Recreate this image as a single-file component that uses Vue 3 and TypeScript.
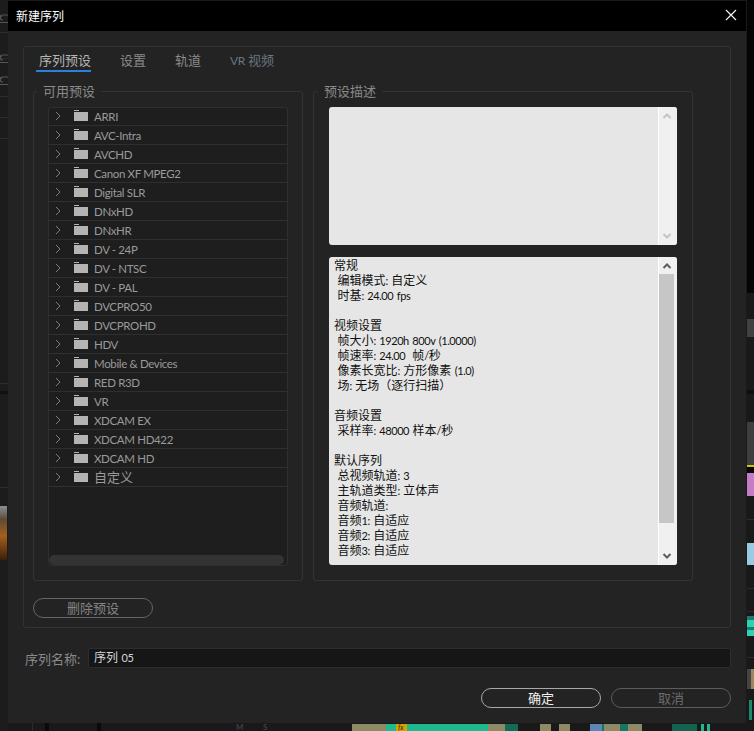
<script setup lang="ts">
interface Run { text: string; latin: boolean }

// Latin and CJK runs use different sizes, so each string is split into runs.
function runs(s: string): Run[] {
  const parts = s.match(/[\u0020-\u007e]+|[^\u0020-\u007e]+/g) ?? []
  return parts.map((text) => ({ text, latin: /^[\u0020-\u007e]/.test(text) }))
}

const presets: string[] = [
  'ARRI', 'AVC-Intra', 'AVCHD', 'Canon XF MPEG2', 'Digital SLR', 'DNxHD', 'DNxHR',
  'DV - 24P', 'DV - NTSC', 'DV - PAL', 'DVCPRO50', 'DVCPROHD', 'HDV', 'Mobile & Devices',
  'RED R3D', 'VR', 'XDCAM EX', 'XDCAM HD422', 'XDCAM HD', '自定义',
]
const tabs = ['序列预设', '设置', '轨道', 'VR 视频']
const info: string[] = [
  '常规', ' 编辑模式: 自定义', ' 时基: 24.00 fps', '',
  '视频设置', ' 帧大小: 1920h 800v (1.0000)', ' 帧速率: 24.00  帧/秒', ' 像素长宽比: 方形像素 (1.0)', ' 场: 无场（逐行扫描）', '',
  '音频设置', ' 采样率: 48000 样本/秒', '',
  '默认序列', ' 总视频轨道: 3', ' 主轨道类型: 立体声', ' 音频轨道:', ' 音频1: 自适应', ' 音频2: 自适应', ' 音频3: 自适应',
]
const sideBlocks = [
  { top: 0, h: 293, c: '#050505', left: 747, w: 7 },
  { top: 319, h: 18, c: '#404040', left: 747, w: 7 },
  { top: 390, h: 4, c: '#0e0e0e', left: 747, w: 7 },
  { top: 422, h: 43, c: '#3e3e3e', left: 747, w: 7 },
  { top: 465, h: 2, c: '#c9c400', left: 747, w: 7 },
  { top: 467, h: 6, c: '#050505', left: 747, w: 7 },
  { top: 473, h: 23, c: '#c47cc6', left: 747, w: 7 },
  { top: 519, h: 1, c: '#2c2c2c', left: 747, w: 7 },
  { top: 543, h: 22, c: '#97cbe2', left: 747, w: 7 },
  { top: 588, h: 1, c: '#2c2c2c', left: 747, w: 7 },
  { top: 611, h: 1, c: '#2c2c2c', left: 747, w: 7 },
  { top: 616, h: 20, c: '#2bd3b4', left: 747, w: 7 },
  { top: 616, h: 4, c: '#1c7d68', left: 747, w: 7 },
  { top: 627, h: 3, c: '#1c7d68', left: 747, w: 7 },
  { top: 657, h: 1, c: '#2c2c2c', left: 747, w: 7 },
  { top: 669, h: 20, c: '#444444', left: 747, w: 4 },
  { top: 669, h: 20, c: '#97875a', left: 751, w: 3 },
  { top: 700, h: 20, c: '#1d8a6c', left: 749, w: 3 },
]
const clips = [
  { left: 352, w: 166, c: '#1fb98d' },
  { left: 352, w: 34, c: '#8f8a66' },
  { left: 396, w: 11, c: '#d6a300' },
  { left: 488, w: 17, c: '#8f8a66' },
  { left: 505, w: 13, c: '#136b55' },
  { left: 540, w: 11, c: '#8f8a66' },
  { left: 559, w: 11, c: '#8f8a66' },
  { left: 590, w: 12, c: '#5f84b8' },
  { left: 602, w: 40, c: '#16775f' },
  { left: 604, w: 16, c: '#8f8a66' },
  { left: 628, w: 14, c: '#8f8a66' },
  { left: 672, w: 25, c: '#14634f' },
  { left: 701, w: 3, c: '#1fb98d' },
  { left: 707, w: 3, c: '#1fb98d' },
]
const trackLabels = [
  { t: 'M', x: 236 },
  { t: 'S', x: 263 },
]
const stripLines = [32, 58, 96, 117, 138, 383, 487]
</script>

<template>
  <div class="screen">
    <div class="left-strip">
      <div v-for="y in stripLines" :key="y" class="strip-line" :style="{ top: y + 'px' }"></div>
      <svg v-for="y in [20, 60, 82]" :key="y" class="undo" :style="{ top: y - 7 + 'px' }" width="8" height="14" viewBox="0 0 8 14">
        <path d="M8 2H3C1 2 0 3 0 4.500S1 7 3 7M0 4.500L2 2.500M0 9.500h8" fill="none" stroke="#555" stroke-width="1.2" />
      </svg>
      <div class="strip-bar"></div>
      <div class="thumb"></div>
    </div>
    <div
      v-for="b in sideBlocks"
      :key="b.top + '-' + b.left"
      class="side-block"
      :style="{ top: b.top + 'px', height: b.h + 'px', background: b.c, left: b.left + 'px', width: b.w + 'px' }"
    ></div>
    <div
      v-for="c in clips"
      :key="c.left"
      class="clip"
      :style="{ left: c.left + 'px', width: c.w + 'px', background: c.c }"
    ></div>
    <span class="fx">fx</span>
    <div class="track-post a"></div>
    <div class="track-post b"></div>
    <div class="track-post c"></div>
    <span
      v-for="l in trackLabels"
      :key="l.t"
      class="track-label"
      :style="{ left: l.x + 'px' }"
    >{{ l.t }}</span>

    <section class="dialog">
      <header class="titlebar">
        <span class="title">新建序列</span>
        <svg class="close" width="12" height="12" viewBox="0 0 12 12">
          <path d="M1 1l10 10M11 1L1 11" stroke="#f2f2f2" stroke-width="1.2" fill="none" />
        </svg>
      </header>

      <div class="tabgroup">
        <nav class="tabs">
          <span
            v-for="(t, i) in tabs"
            :key="t"
            class="tab"
            :class="{ active: i === 0, dim: i === 3 }"
          ><span v-for="(r, k) in runs(t)" :key="k" :class="{ 'lat-tab': r.latin }">{{ r.text }}</span></span>
        </nav>

        <div class="columns">
          <fieldset class="group group-left">
            <legend>可用预设</legend>
            <div class="list">
              <div v-for="p in presets" :key="p" class="row">
                <svg class="chev" width="6" height="10" viewBox="0 0 6 10">
                  <path d="M1 1l4 4-4 4" fill="none" stroke="#7d7d7d" stroke-width="1" />
                </svg>
                <svg class="folder" width="14" height="12" viewBox="0 0 14 12">
                  <rect x="0" y="0" width="5" height="1" fill="#b4b4b4" />
                  <rect x="0" y="2" width="14" height="9" fill="#b4b4b4" />
                </svg>
                <span class="name"><span v-for="(r, k) in runs(p)" :key="k" :class="{ 'lat-row': r.latin }">{{ r.text }}</span></span>
              </div>
              <div class="hthumb"></div>
            </div>
          </fieldset>

          <fieldset class="group group-right">
            <legend>预设描述</legend>
            <div class="panel panel-desc">
              <div class="panel-body"></div>
              <div class="vbar faint">
                <svg width="10" height="8" viewBox="0 0 10 8"><path d="M1.500 6L5 2.500 8.500 6" fill="none" stroke="currentColor" stroke-width="2" /></svg>
                <svg class="arrow-end" width="10" height="8" viewBox="0 0 10 8"><path d="M1.500 2L5 5.500 8.500 2" fill="none" stroke="currentColor" stroke-width="2" /></svg>
              </div>
            </div>
            <div class="panel panel-info">
              <div class="panel-body text">
                <div v-for="(l, i) in info" :key="i" class="line"><span v-for="(r, k) in runs(l)" :key="k" :class="{ 'lat-text': r.latin }">{{ r.text }}</span></div>
              </div>
              <div class="vbar">
                <svg width="10" height="8" viewBox="0 0 10 8"><path d="M1.500 6L5 2.500 8.500 6" fill="none" stroke="currentColor" stroke-width="2" /></svg>
                <div class="vthumb"></div>
                <svg class="arrow-end" width="10" height="8" viewBox="0 0 10 8"><path d="M1.500 2L5 5.500 8.500 2" fill="none" stroke="currentColor" stroke-width="2" /></svg>
              </div>
            </div>
          </fieldset>
        </div>

        <button class="btn btn-delete" type="button">删除预设</button>
      </div>

      <div class="name-row">
        <span class="name-label">序列名称:</span>
        <div class="name-input"><span v-for="(r, k) in runs('序列 05')" :key="k" :class="{ 'lat-text': r.latin }">{{ r.text }}</span></div>
      </div>

      <div class="actions">
        <button class="btn btn-ok" type="button">确定</button>
        <button class="btn btn-cancel" type="button">取消</button>
      </div>
    </section>
  </div>
</template>

<style>
html, body { margin: 0; background: #1a1a1a; }
</style>

<style scoped>
.screen {
  position: relative;
  width: 754px;
  height: 731px;
  overflow: hidden;
  background: #191919;
  font-family: "Lato", "Noto Sans CJK SC", sans-serif;
  font-size: 12px;
}
.left-strip {
  position: absolute;
  left: 0;
  top: 0;
  width: 8px;
  height: 731px;
  background: #1c1c1c;
}
.strip-line { position: absolute; left: 0; width: 8px; height: 1px; background: #2c2c2c; }
.strip-bar { position: absolute; left: 0; top: 391px; width: 8px; height: 3px; background: #111; }
.undo { position: absolute; left: 0; }
.thumb {
  position: absolute;
  left: 0;
  top: 506px;
  width: 7px;
  height: 54px;
  background: linear-gradient(#8b8f90 0, #5d4a35 25%, #a35f1b 55%, #3d1f0a 100%);
}
.side-block { position: absolute; }
.clip { position: absolute; top: 724px; height: 7px; }
.fx {
  position: absolute;
  left: 398px;
  top: 724px;
  font-size: 7px;
  line-height: 7px;
  font-style: italic;
  color: #3a2c00;
}
.track-post { position: absolute; top: 723px; height: 8px; background: #0a0a0a; }
.track-post.a { left: 32px; width: 1px; background: #2c2c2c; }
.track-post.b { left: 45px; width: 4px; }
.track-post.c { left: 97px; width: 4px; }
.track-label {
  position: absolute;
  top: 723px;
  font-size: 8px;
  line-height: 8px;
  color: #4c4c4c;
}

.dialog {
  position: absolute;
  left: 8px;
  top: 1px;
  width: 738px;
  height: 722px;
  background: #232323;
  display: flex;
  flex-direction: column;
}
.titlebar {
  box-sizing: border-box;
  height: 30px;
  flex: none;
  background: #000;
  display: flex;
  align-items: center;
  justify-content: space-between;
  padding: 0 9px 2px 8px;
}
.title { color: #fff; font-size: 12px; }
.tabgroup {
  margin: 15px 15px 0;
  height: 582px;
  box-sizing: border-box;
  border: 1px solid #333;
  border-radius: 3px;
  padding: 0 9px;
  flex: none;
}
.tabs { display: flex; gap: 26px; padding-left: 3px; height: 25px; }
.tab {
  box-sizing: border-box;
  height: 25px;
  padding: 4px 0 0 3px;
  font-size: 13px;
  line-height: 18px;
  color: #8a8a8a;
}
.tab.active { color: #b4b4b4; border-bottom: 2px solid #2b80dc; }
.tab.dim { color: #6b7680; }
.lat-tab { font-size: 12px; letter-spacing: -0.3px; }

.columns { display: flex; gap: 10px; margin-top: 11px; }
.group {
  box-sizing: border-box;
  margin: 0;
  padding: 8px 14px 14px;
  height: 498px;
  border: 1px solid #333;
  border-radius: 3px;
  display: flex;
  flex-direction: column;
  min-width: 0;
}
.group legend {
  margin-left: -11px;
  padding: 0 6px;
  font-size: 13px;
  line-height: 16px;
  color: #8a8a8a;
}
.group-left { width: 270px; }
.group-right { width: 380px; padding-left: 15px; padding-right: 15px; }
.list {
  box-sizing: border-box;
  flex: 1;
  display: flex;
  flex-direction: column;
  background: #1e1e1e;
  border: 1px solid #2f2f2f;
  border-top: 0;
  box-shadow: inset 0 1px #2f2f2f;
  border-radius: 3px;
  overflow: hidden;
}
.row {
  box-sizing: border-box;
  flex: none;
  height: 19px;
  display: flex;
  align-items: center;
  border-bottom: 1px solid #2f2f2f;
  padding-left: 6px;
}
.chev { margin-right: 13px; flex: none; }
.folder { margin-right: 6px; flex: none; }
.name { color: #9a9a9a; font-size: 13px; line-height: 17px; white-space: nowrap; }
.lat-row { font-size: 11.5px; letter-spacing: -0.35px; }
.hthumb {
  margin: auto 3px 0 0;
  height: 10px;
  border-radius: 5px;
  background: #333;
  flex: none;
}

.panel {
  box-sizing: border-box;
  display: flex;
  background: #e6e6e6;
  border-radius: 3px;
  overflow: hidden;
  flex: none;
}
.panel-desc { height: 138px; }
.panel-info { height: 308px; margin-top: 12px; }
.panel-body { flex: 1; min-width: 0; }
.text { padding: 1px 0 0 5px; color: #111; font-size: 12px; }
.line { height: 15px; line-height: 15px; white-space: pre; }
.lat-text { font-size: 11px; letter-spacing: -0.4px; word-spacing: 1px; }
.vbar {
  box-sizing: border-box;
  width: 19px;
  flex: none;
  background: #f0f0f0;
  border-left: 1px solid #fff;
  display: flex;
  flex-direction: column;
  align-items: center;
  padding: 5px 3px 5px 0;
  color: #5e5e5e;
}
.vbar.faint { color: #c4c4c4; }
.vthumb { width: 15px; height: 249px; margin-top: 4px; background: #c6c6c6; flex: none; }
.arrow-end { margin-top: auto; }

.btn {
  box-sizing: border-box;
  width: 120px;
  height: 20px;
  padding: 0;
  background: transparent;
  border: 1.5px solid #666;
  border-radius: 10px;
  font-family: inherit;
  font-size: 13px;
  line-height: 16px;
  color: #848484;
}
.btn-delete { display: block; margin-top: 17px; }
.btn-ok { border-color: #a8a8a8; color: #f0f0f0; }
.btn-cancel { border-color: #5c5c5c; color: #6c6c6c; }

.name-row {
  display: flex;
  align-items: center;
  margin: 20px 15px 0 17px;
  height: 20px;
  flex: none;
}
.name-label { width: 63px; flex: none; color: #8a8a8a; font-size: 13px; }
.name-input {
  box-sizing: border-box;
  flex: 1;
  height: 20px;
  line-height: 18px;
  padding-left: 5px;
  background: #161616;
  border: 1px solid #2d2d2d;
  border-radius: 2px;
  color: #d6d6d6;
  font-size: 12px;
}
.actions {
  display: flex;
  justify-content: flex-end;
  gap: 10px;
  margin: 20px 15px 0 0;
  flex: none;
}
</style>
